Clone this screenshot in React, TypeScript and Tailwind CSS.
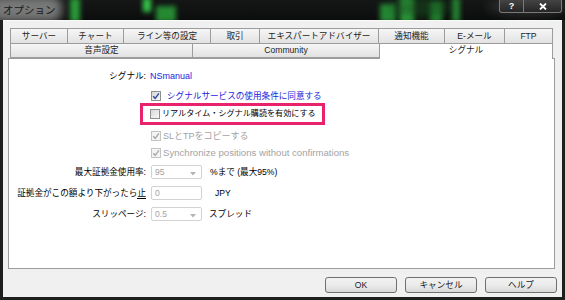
import React from 'react'

const row1 = [
  { label: 'サーバー', w: 58 },
  { label: 'チャート', w: 56 },
  { label: 'ライン等の設定', w: 87 },
  { label: '取引', w: 49 },
  { label: 'エキスパートアドバイザー', w: 119 },
  { label: '通知機能', w: 66 },
  { label: 'E-メール', w: 60 },
  { label: 'FTP', w: 48 },
]

const row2 = [
  { label: '音声設定', w: 183 },
  { label: 'Community', w: 187 },
  { label: 'シグナル', w: 173, active: true },
]

function TitleBackdrop() {
  return (
    <svg width="565" height="20" viewBox="0 0 565 20" className="block">
      <defs>
        <filter id="blur" x="-50%" y="-50%" width="200%" height="200%">
          <feGaussianBlur stdDeviation="2.5" />
        </filter>
        <filter id="blur2" x="-50%" y="-50%" width="200%" height="200%">
          <feGaussianBlur stdDeviation="5" />
        </filter>
        <linearGradient id="bg" x1="0" x2="0" y1="0" y2="1">
          <stop offset="0" stopColor="#141716" />
          <stop offset="1" stopColor="#0c0e0d" />
        </linearGradient>
      </defs>
      <rect width="565" height="20" fill="url(#bg)" />
      <rect x="-10" y="-4" width="72" height="26" rx="10" fill="#9a9a9a" opacity="0.75" filter="url(#blur2)" />
      <rect x="70" y="-2" width="10" height="24" fill="#2fb040" opacity="0.85" filter="url(#blur)" />
      <rect x="143" y="-2" width="8" height="14" fill="#35c846" filter="url(#blur)" />
      <rect x="156" y="6" width="20" height="16" fill="#2aa83a" opacity="0.8" filter="url(#blur)" />
      <rect x="380" y="4" width="16" height="18" fill="#2fb040" opacity="0.75" filter="url(#blur)" />
      <rect x="400" y="-2" width="14" height="24" fill="#37c848" opacity="0.85" filter="url(#blur)" />
      <rect x="430" y="2" width="12" height="20" fill="#2aa83a" opacity="0.8" filter="url(#blur)" />
      <rect x="452" y="-2" width="8" height="24" fill="#2fb040" opacity="0.7" filter="url(#blur)" />
      <ellipse cx="420" cy="8" rx="30" ry="10" fill="#124a1a" opacity="0.6" filter="url(#blur2)" />
      <ellipse cx="528" cy="6" rx="40" ry="10" fill="#3a3a3a" opacity="0.6" filter="url(#blur2)" />
    </svg>
  )
}

function CheckBox({ checked, disabled }: { checked?: boolean; disabled?: boolean }) {
  return (
    <span
      className={
        'flex h-[10px] w-[10px] shrink-0 items-center justify-center border ' +
        (disabled
          ? 'border-[#c4c4c4] bg-[#f4f4f4]'
          : 'border-[#8e8f8f] bg-gradient-to-br from-[#d8d8d8] to-[#f8f8f8]')
      }
    >
      {checked && (
        <svg width="8" height="8" viewBox="0 0 8 8">
          <path
            d="M1.2 4.2 L3.2 6.3 L6.9 1.4"
            fill="none"
            stroke={disabled ? '#a9a9a9' : '#2a4a9a'}
            strokeWidth="1.4"
          />
        </svg>
      )}
    </span>
  )
}

function Combo({ value, arrow = true }: { value: string; arrow?: boolean }) {
  return (
    <div className="flex h-[14px] w-[51px] shrink-0 items-center justify-between rounded-[2px] border border-[#d2d2d2] bg-white pl-[3px] pr-[5px] text-[#a3a3a3]">
      <span>{value}</span>
      {arrow && (
        <svg width="6" height="4" viewBox="0 0 6 4" className="mt-[3px]">
          <path d="M0 0 L6 0 L3 3.5 Z" fill="#b4b4b4" />
        </svg>
      )}
    </div>
  )
}

function Button({ label }: { label: string }) {
  return (
    <div className="flex h-[16px] w-[72px] items-center justify-center rounded-[3px] border border-[#707070] bg-gradient-to-b from-[#f2f2f2] via-[#ebebeb] to-[#d9d9d9] text-[#1b1b1b]">
      {label}
    </div>
  )
}

export default function App() {
  return (
    <div className="relative h-[300px] w-[565px] overflow-hidden bg-[#1d1f1e] font-['Liberation_Sans','Noto_Sans_CJK_JP',sans-serif] text-[8.6px] leading-none text-black">
      {/* タイトルバー */}
      <div className="relative h-[20px]">
        <TitleBackdrop />
        <span className="absolute left-[3px] top-[3px] text-[10.5px] leading-[14px] text-[#1a1a1a]">オプション</span>
        <div className="absolute right-[3px] top-0 flex">
          <div className="flex h-[13px] w-[25px] items-center justify-center rounded-bl-[3px] border border-t-0 border-[#7a7a7a] bg-gradient-to-b from-[#444] to-[#262626] text-[9px] font-bold text-white">
            ?
          </div>
          <div className="flex h-[13px] w-[38px] items-center justify-center rounded-br-[3px] border border-l-0 border-t-0 border-[#7a7a7a] bg-gradient-to-b from-[#444] to-[#262626]">
            <svg width="8" height="7" viewBox="0 0 8 7">
              <path d="M1 0.5 L7 6.5 M7 0.5 L1 6.5" stroke="#fff" strokeWidth="1.8" />
            </svg>
          </div>
        </div>
      </div>

      {/* ダイアログ本体 */}
      <div className="ml-[3px] flex h-[277px] w-[559px] flex-col border-t border-[#fafafa] bg-[#f0f0f0] pl-[5px] pt-[7px]">
        <div className="w-[547px]">
          <div className="ml-[2px] flex h-[15px]">
            {row1.map((t, i) => (
              <div
                key={t.label}
                style={{ width: t.w }}
                className={
                  'flex items-center justify-center border-r border-t border-[#9c9c9c] bg-gradient-to-b from-[#f6f6f6] to-[#e2e2e2] text-[#1e1e1e] ' +
                  (i === 0 ? 'border-l' : '')
                }
              >
                {t.label}
              </div>
            ))}
          </div>
          <div className="relative z-10 ml-[2px] flex h-[15px]">
            {row2.map((t, i) => (
              <div
                key={t.label}
                style={{ width: t.w, height: t.active ? 16 : 15 }}
                className={
                  'flex items-center justify-center border-r border-t border-[#9c9c9c] text-[#1e1e1e] ' +
                  (i === 0 ? 'border-l ' : '') +
                  (t.active ? 'bg-white pb-[2px]' : 'border-b bg-gradient-to-b from-[#f6f6f6] to-[#e2e2e2]')
                }
              >
                {t.label}
              </div>
            ))}
          </div>

          {/* シグナル タブの中身 */}
          <div className="flex h-[211px] flex-col whitespace-nowrap border border-[#9c9c9c] bg-white">
            <div className="mt-[10px] flex h-[14px] items-center">
              <span className="w-[137px] text-right">シグナル:</span>
              <span className="ml-[4px] text-[9px] text-[#1c1ce0]">NSmanual</span>
            </div>

            <div className="ml-[142px] mt-[6px] flex h-[14px] items-center gap-[6px]">
              <CheckBox checked />
              <span className="text-[#1c1ce0]">シグナルサービスの使用条件に同意する</span>
            </div>

            <div className="ml-[131px] flex h-[22px] w-[185px] items-center gap-[2px] border-[3px] border-[#e8236b] pl-[7px]">
              <CheckBox />
              <span className="text-[8.1px]">リアルタイム・シグナル購読を有効にする</span>
            </div>

            <div className="ml-[142px] mt-[4px] flex h-[14px] items-center gap-[2px] text-[#a3a3a3]">
              <CheckBox checked disabled />
              <span className="text-[9px]">SLとTPをコピーする</span>
            </div>

            <div className="ml-[142px] mt-[3px] flex h-[14px] items-center gap-[2px] text-[#a3a3a3]">
              <CheckBox checked disabled />
              <span className="text-[9.6px]">Synchronize positions without confirmations</span>
            </div>

            <div className="mt-[5px] flex h-[14px] items-center">
              <span className="w-[137px] text-right">最大証拠金使用率:</span>
              <div className="ml-[5px]">
                <Combo value="95" />
              </div>
              <span className="ml-[8px]">%まで (最大95%)</span>
            </div>

            <div className="mt-[7px] flex h-[14px] items-center">
              <span className="w-[137px] text-right">
                証拠金がこの額より下がったら<span className="border-b border-black">止</span>
              </span>
              <div className="ml-[5px]">
                <Combo value="0" arrow={false} />
              </div>
              <span className="ml-[13px]">JPY</span>
            </div>

            <div className="mt-[7px] flex h-[14px] items-center">
              <span className="w-[137px] text-right">スリッページ:</span>
              <div className="ml-[5px]">
                <Combo value="0.5" />
              </div>
              <span className="ml-[7px]">スプレッド</span>
            </div>
          </div>
        </div>

        <div className="mt-[8px] flex w-[549px] justify-end gap-[8px]">
          <Button label="OK" />
          <Button label="キャンセル" />
          <Button label="ヘルプ" />
        </div>
      </div>
    </div>
  )
}
